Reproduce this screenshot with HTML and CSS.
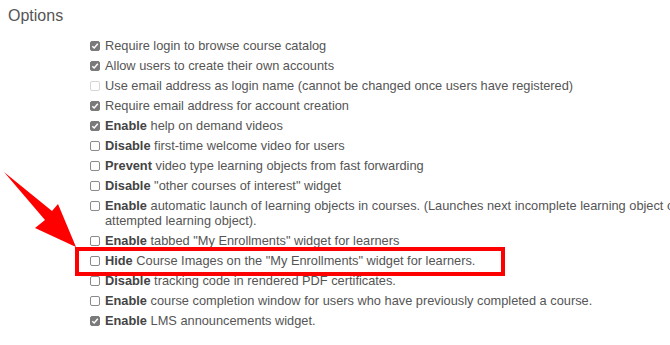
FILE: index.html
```html
<!DOCTYPE html>
<html>
<head>
<meta charset="utf-8">
<link rel="stylesheet" href="styles.css">
</head>
<body>
<div class="page">
  <h2 class="title">Options</h2>
  <ul class="opts">
    <li class="opt"><span class="cb on"></span><span class="lbl">Require login to browse course catalog</span></li>
    <li class="opt"><span class="cb on"></span><span class="lbl">Allow users to create their own accounts</span></li>
    <li class="opt"><span class="cb dis"></span><span class="lbl">Use email address as login name (cannot be changed once users have registered)</span></li>
    <li class="opt"><span class="cb on"></span><span class="lbl">Require email address for account creation</span></li>
    <li class="opt"><span class="cb on"></span><span class="lbl"><b>Enable</b> help on demand videos</span></li>
    <li class="opt"><span class="cb"></span><span class="lbl"><b>Disable</b> first-time welcome video for users</span></li>
    <li class="opt"><span class="cb"></span><span class="lbl"><b>Prevent</b> video type learning objects from fast forwarding</span></li>
    <li class="opt"><span class="cb"></span><span class="lbl"><b>Disable</b> "other courses of interest" widget</span></li>
    <li class="opt"><span class="cb"></span><span class="lbl"><b>Enable</b> automatic launch of learning objects in courses. (Launches next incomplete learning object of previously attempted learning object).</span></li>
    <li class="opt"><span class="cb"></span><span class="lbl"><b>Enable</b> tabbed "My Enrollments" widget for learners</span></li>
    <li class="opt"><span class="cb"></span><span class="lbl"><b>Hide</b> Course Images on the "My Enrollments" widget for learners.</span></li>
    <li class="opt"><span class="cb"></span><span class="lbl"><b>Disable</b> tracking code in rendered PDF certificates.</span></li>
    <li class="opt"><span class="cb"></span><span class="lbl"><b>Enable</b> course completion window for users who have previously completed a course.</span></li>
    <li class="opt"><span class="cb on"></span><span class="lbl"><b>Enable</b> LMS announcements widget.</span></li>
  </ul>
  <div class="highlight"></div>
  <svg class="arrow" width="90" height="90" viewBox="0 0 90 90">
    <polygon points="4,7 52,46 58,39 76,82 35,63 45,55" fill="#ff0000"/>
  </svg>
</div>
</body>
</html>
```
FILE: styles.css
```css
html, body {
  margin: 0;
  padding: 0;
  background: #fff;
  overflow: hidden;
}
body {
  width: 670px;
  height: 345px;
}
.page {
  position: relative;
  width: 670px;
  height: 345px;
  overflow: hidden;
  font-family: "Liberation Sans", Arial, sans-serif;
  color: #555;
}
.title {
  margin: 0;
  padding: 6px 0 0 8px;
  font-size: 16px;
  font-weight: normal;
  line-height: 20px;
  color: #555;
}
.opts {
  list-style: none;
  margin: 0;
  padding: 12px 0 0 90px;
  width: 695px;
}
.opt {
  display: flex;
  align-items: flex-start;
  font-size: 12.8px;
  line-height: 15px;
  margin-bottom: 5px;
}
.lbl {
  flex: 1;
  color: #555;
}
.lbl b {
  color: #444;
  font-weight: bold;
}
.cb {
  flex: none;
  box-sizing: border-box;
  width: 10px;
  height: 10px;
  margin: 3px 5px 0 0;
  border: 1px solid #8a8a8a;
  border-radius: 2px;
  background: #fff;
}
.cb.dis {
  border-color: #d6d6d6;
}
.cb.on {
  border-color: #7a7a7a;
  background: #7a7a7a url("data:image/svg+xml;utf8,<svg xmlns='http://www.w3.org/2000/svg' width='8' height='8' viewBox='0 0 8 8'><path d='M1.3 4.2 L3.2 6 L6.8 1.8' fill='none' stroke='white' stroke-width='1.5'/></svg>") center/8px 8px no-repeat;
}
.highlight {
  position: absolute;
  left: 75px;
  top: 247px;
  width: 430px;
  height: 29px;
  box-sizing: border-box;
  border: 4px solid #ff0000;
}
.arrow {
  position: absolute;
  left: 0;
  top: 165px;
}
```
